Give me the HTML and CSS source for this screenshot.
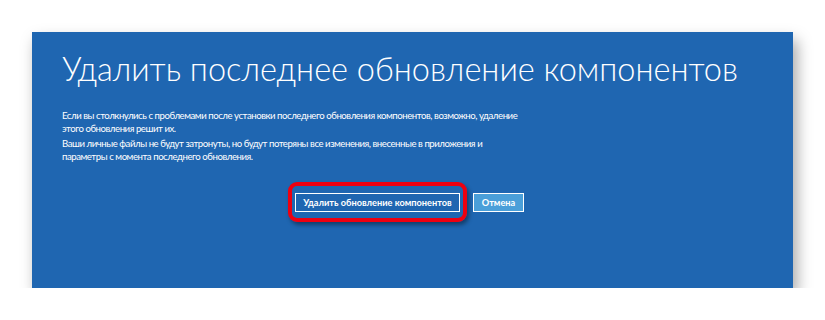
FILE: index.html
```html
<!DOCTYPE html>
<html lang="ru">
<head>
    <meta charset="UTF-8">
    <title>Удалить последнее обновление компонентов</title>
    <link rel="stylesheet" href="styles.css">
</head>
<body>
    <div class="recovery-panel">
        <h1 class="title">Удалить последнее обновление компонентов</h1>

        <div class="message">
            <p>Если вы столкнулись с проблемами после установки последнего обновления компонентов, возможно, удаление<br>этого обновления решит их.</p>
            <p>Ваши личные файлы не будут затронуты, но будут потеряны все изменения, внесенные в приложения и<br>параметры с момента последнего обновления.</p>
        </div>

        <div class="actions">
            <span class="highlight">
                <button class="btn btn-primary">Удалить обновление компонентов</button>
            </span>
            <button class="btn btn-cancel">Отмена</button>
        </div>
    </div>
</body>
</html>
```

FILE: styles.css
```css
* {
    margin: 0;
    padding: 0;
    box-sizing: border-box;
}

body {
    background: #ffffff;
    font-family: 'Lato', 'Noto Sans', sans-serif;
}

.recovery-panel {
    width: 761px;
    height: 256px;
    margin: 32px 0 0 32px;
    padding: 14px 30px 0 30px;
    background: #1f66b1;
    color: #ffffff;
    box-shadow: 4px 8px 14px rgba(0, 0, 0, 0.35);
}

.title {
    font-size: 32.5px;
    font-weight: 300;
    line-height: 46px;
    white-space: nowrap;
}

.message {
    margin-top: 17px;
    font-size: 9.6px;
    letter-spacing: -0.45px;
    line-height: 13px;
}

.message p + p {
    margin-top: 2px;
}

.actions {
    display: flex;
    justify-content: center;
    gap: 13px;
    margin-top: 30px;
    padding-right: 6px;
}

.highlight {
    position: relative;
    display: inline-flex;
}

.highlight::after {
    content: '';
    position: absolute;
    top: -11px;
    bottom: -10px;
    left: -7px;
    right: -7px;
    border: 4px solid #ee0010;
    border-radius: 9px;
    box-shadow: 2px 3px 4px rgba(0, 0, 0, 0.4);
}

.btn {
    height: 19px;
    border: 1px solid #ffffff;
    color: #ffffff;
    font-family: 'Lato', 'Noto Sans', sans-serif;
    font-size: 9.2px;
    font-weight: 700;
    line-height: 17px;
    white-space: nowrap;
}

.btn-primary {
    width: 165px;
    background: #1f66b1;
}

.btn-cancel {
    width: 51px;
    background: #4a9fd9;
}
```
